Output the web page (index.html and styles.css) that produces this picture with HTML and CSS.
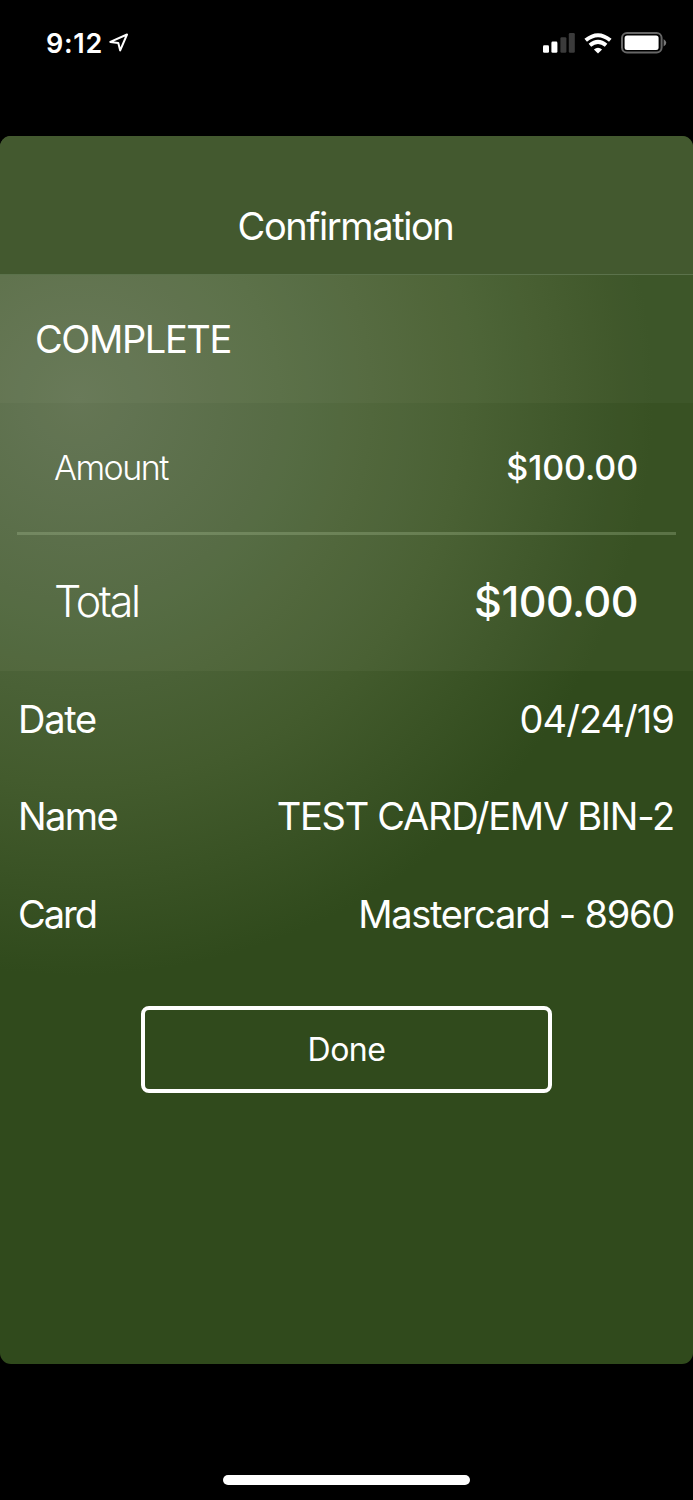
FILE: index.html
```html
<!DOCTYPE html>
<html lang="en">
<head>
<meta charset="utf-8">
<title>Confirmation</title>
<link rel="stylesheet" href="styles.css">
</head>
<body>
<div class="phone">
  <div class="status">
    <div class="clock">
      <span class="time">9:12</span>
      <svg class="location" width="20" height="20" viewBox="0 0 20 20"><path d="M1.3 8.900 18 1.500 11.200 17.400 9.300 9.900Z" fill="none" stroke="#fff" stroke-width="2" stroke-linejoin="round"/></svg>
    </div>
    <div class="indicators">
      <svg width="32" height="20" viewBox="0 0 32 20"><g fill="#fff"><rect x="0" y="12.2" width="6" height="7.6" rx="1.3"/><rect x="8.4" y="8.6" width="6" height="11.2" rx="1.3"/></g><g fill="#3b3b3b"><rect x="17.4" y="4.2" width="6" height="15.6" rx="1.3"/><rect x="25.8" y="0" width="6" height="19.8" rx="1.3"/></g></svg>
      <svg width="28" height="21" viewBox="0 0 28 21"><g fill="none" stroke="#fff" stroke-width="4"><path d="M1.700 7.300Q14-2.900 26.300 7.300"/><path d="M5.900 12.200Q14 5.600 22.100 12.200"/></g><path d="M14 20.500 9.900 16.400Q14 13.300 18.100 16.400Z" fill="#fff"/></svg>
      <svg width="46" height="22" viewBox="0 0 46 22"><rect x="1" y="1" width="39.600" height="19.600" rx="5" fill="none" stroke="#666" stroke-width="2"/><rect x="3.600" y="3.600" width="34" height="14.400" rx="2.500" fill="#fff"/><path d="M42.600 7Q48 10.800 42.600 14.600Z" fill="#777"/></svg>
    </div>
  </div>
  <main class="sheet">
    <header class="header"><h1 class="title">Confirmation</h1></header>
    <div class="state"><span class="state-text">COMPLETE</span></div>
    <section class="totals">
      <div class="line amount"><span class="label amount-label">Amount</span><span class="amount-value">$100.00</span></div>
      <div class="line total"><span class="label total-label">Total</span><span class="total-value">$100.00</span></div>
    </section>
    <section class="details">
      <div class="detail"><span class="date-label">Date</span><span class="date-value">04/24/19</span></div>
      <div class="detail"><span class="name-label">Name</span><span class="name-value">TEST CARD/EMV BIN-2</span></div>
      <div class="detail"><span class="card-label">Card</span><span class="card-value">Mastercard - 8960</span></div>
    </section>
    <button class="done">Done</button>
  </main>
  <div class="home"></div>
</div>
</body>
</html>
```
FILE: styles.css
```css
* { box-sizing: border-box; }
body { margin: 0; background: #000; color: #fff; font-family: Inter, "Liberation Sans", sans-serif; }
.phone { width: 693px; height: 1500px; display: flex; flex-direction: column; background: #000; overflow: hidden; }
.status { height: 136px; flex: none; padding: 28px 26px 0 46px; display: flex; justify-content: space-between; align-items: flex-start; }
.clock { display: flex; align-items: center; gap: 6px; height: 30px; }
.time { font-size: 27px; font-weight: 600; letter-spacing: 0.7px; }
.location { margin-top: -1px; }
.indicators { display: flex; align-items: center; gap: 9px; height: 30px; }
.sheet {
  height: 1228px; flex: none; border-radius: 11px; overflow: hidden;
  display: flex; flex-direction: column; white-space: nowrap;
  background: radial-gradient(circle 575px at 78px 264px, #5f7150 0, #51673f 35%, #435b2d 67%, #304a1c 100%), #304a1c;
}
.header { height: 139px; flex: none; background: #43592f; border-bottom: 1px solid #5b724b; display: flex; justify-content: center; padding-top: 67px; }
.title { margin: 0; font-size: 38px; font-weight: 400; line-height: 46px; letter-spacing: -1.4px; padding-right: 2px; }
.state { height: 128px; flex: none; padding: 0 35px; display: flex; align-items: center; background: rgba(255,250,225,.065); }
.state-text { font-size: 38px; letter-spacing: -1.4px; }
.totals { height: 268px; flex: none; background: rgba(255,250,225,.04); padding: 0 17px; }
.line { display: flex; justify-content: space-between; align-items: center; padding: 0 38px 0 37px; }
.amount { height: 132px; border-bottom: 3px solid rgba(171,196,151,.3); }
.total { height: 136px; padding-bottom: 4px; }
.label { font-weight: 300; }
.amount-label { font-size: 34px; letter-spacing: -1.5px; }
.amount-value { font-size: 34px; font-weight: 500; letter-spacing: -0.1px; }
.total-label { font-size: 43px; letter-spacing: -2.3px; }
.total-value { font-size: 43px; font-weight: 500; letter-spacing: -0.5px; }
.details { flex: none; padding: 0 19px 0 18px; }
.detail { height: 97.3px; padding-bottom: 1px; display: flex; justify-content: space-between; align-items: center; font-size: 38px; letter-spacing: -1.27px; }
.date-value { letter-spacing: -0.95px; }
.name-label { letter-spacing: -1.6px; }
.card-label { letter-spacing: -2px; }
.done { width: 411px; height: 87px; margin: 43px 0 0 141px; border: 4px solid #fff; border-radius: 8px; padding: 0; background: transparent; color: #fff; font: 400 32px Inter, "Liberation Sans", sans-serif; letter-spacing: -0.5px; }
.home { width: 247px; height: 10px; border-radius: 5px; background: #fff; margin: 111px 0 0 223px; flex: none; }
```
